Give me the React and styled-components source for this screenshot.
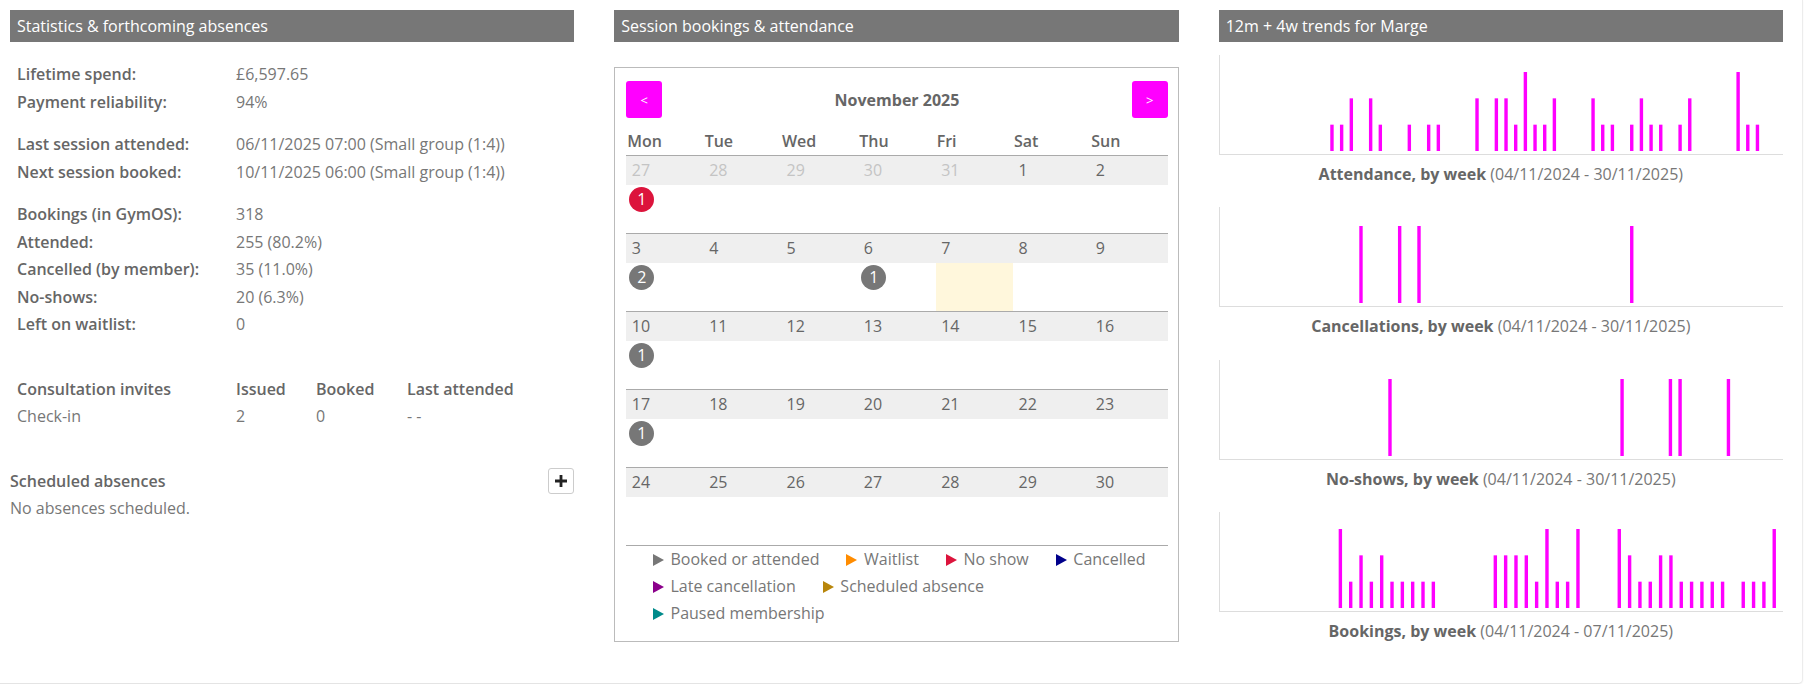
import React from 'react';
import styled, { createGlobalStyle } from 'styled-components';

const GlobalStyle = createGlobalStyle`
  html, body { margin: 0; padding: 0; background: #fff; }
  body { font-family: "Open Sans", "Noto Sans", sans-serif; font-size: 16px; color: #777; }
  *, *::before, *::after { box-sizing: border-box; }
`;

const Card = styled.div`
  width: 1803px;
  background: #fff;
  padding: 10px 19px 41px 10px;
  border-right: 1px solid #ececec;
  border-bottom: 1px solid #e4e4e4;
  border-radius: 0 0 5px 0;
  box-shadow: 0 1px 2px rgba(0, 0, 0, 0.06);
  display: grid;
  grid-template-columns: repeat(3, minmax(0, 1fr));
  column-gap: 40px;
  align-items: start;
`;

const Column = styled.section`
  display: flex;
  flex-direction: column;
  min-width: 0;
`;

const PanelHeader = styled.div`
  height: 32px;
  line-height: 32px;
  background: #777;
  color: #fff;
  font-size: 16px;
  padding-left: 7px;
  white-space: nowrap;
`;

/* ---------- left column ---------- */
const StatGroup = styled.div`
  margin-top: ${(p) => p.$top || 0}px;
`;

const StatRow = styled.div`
  display: grid;
  grid-template-columns: ${(p) => p.$cols || '219px 1fr'};
  line-height: 27.5px;
  padding-left: 7px;
  white-space: nowrap;
`;

const Label = styled.span`
  font-weight: 600;
  color: #666;
`;

const Value = styled.span`
  color: #777;
`;

const AbsenceHead = styled.div`
  margin-top: 37px;
  height: 27px;
  display: flex;
  align-items: center;
  justify-content: space-between;
`;

const SubHeading = styled.span`
  font-weight: 600;
  color: #666;
`;

const PlusButton = styled.button`
  width: 26px;
  height: 26px;
  padding: 0;
  border: 1px solid #ccc;
  border-radius: 3px;
  background: #fff;
  display: flex;
  align-items: center;
  justify-content: center;
  cursor: pointer;
`;

const Note = styled.div`
  line-height: 27px;
  color: #777;
`;

/* ---------- middle column ---------- */
const CalendarBox = styled.div`
  margin-top: 25px;
  border: 1px solid #bbb;
  padding: 13px 10px 14px 11px;
`;

const NavRow = styled.div`
  height: 37px;
  display: flex;
  align-items: center;
  justify-content: space-between;
`;

const NavButton = styled.button`
  width: 36px;
  height: 37px;
  border: none;
  border-radius: 3px;
  background: #f0f;
  color: #fff;
  font-family: inherit;
  font-size: 13px;
  padding: 0;
  cursor: pointer;
`;

const MonthTitle = styled.div`
  font-weight: 700;
  color: #666;
  font-size: 16px;
`;

const DayHeadRow = styled.div`
  display: grid;
  grid-template-columns: repeat(7, 1fr);
  padding: 12px 0 3px;
  line-height: 22px;
`;

const DayHead = styled.div`
  font-weight: 600;
  color: #666;
  padding-left: 1px;
`;

const Week = styled.div`
  border-top: 1px solid #aaa;
`;

const DateStrip = styled.div`
  display: grid;
  grid-template-columns: repeat(7, 1fr);
  height: 29px;
  line-height: 29px;
  background: #efefef;
`;

const DateNum = styled.div`
  padding-left: 5.5px;
  color: ${(p) => (p.$muted ? '#c4c4c4' : '#666')};
`;

const DayCells = styled.div`
  display: grid;
  grid-template-columns: repeat(7, 1fr);
  height: 48px;
`;

const DayCell = styled.div`
  background: ${(p) => (p.$today ? '#fff7dc' : 'transparent')};
  padding: 2px 0 0 3px;
`;

const Badge = styled.div`
  width: 25px;
  height: 25px;
  border-radius: 50%;
  background: ${(p) => p.$color};
  color: #fff;
  text-align: center;
  line-height: 25px;
  font-size: 16px;
`;

const Legend = styled.ul`
  list-style: none;
  margin: 0;
  border-top: 1px solid #aaa;
  padding: 0 0 0 26.6px;
  display: flex;
  flex-wrap: wrap;
  column-gap: 27px;
  line-height: 27px;
`;

const LegendItem = styled.li`
  display: inline-flex;
  align-items: center;
  gap: 6.6px;
  color: #777;
  white-space: nowrap;
`;

const Tri = styled.span`
  width: 0;
  height: 0;
  border-left: 11px solid ${(p) => p.$color};
  border-top: 6.5px solid transparent;
  border-bottom: 6.5px solid transparent;
`;

/* ---------- right column ---------- */
const ChartBlock = styled.div`
  margin-top: ${(p) => p.$top}px;
`;

const Plot = styled.div`
  height: 100px;
  border-left: 1px solid #ddd;
  border-bottom: 1px solid #ddd;
`;

const PlotSvg = styled.svg`
  display: block;
  width: 100%;
  height: 99px;
`;

const Caption = styled.div`
  margin-top: 8px;
  line-height: 22px;
  text-align: center;
  color: #777;
  white-space: nowrap;
`;

const CaptionStrong = styled.span`
  font-weight: 700;
  color: #666;
`;

const MAGENTA = '#f0f';

const range = (a, b) => Array.from({ length: b - a + 1 }, (_, i) => a + i);

const charts = [
  {
    title: 'Attendance, by week',
    dates: '(04/11/2024 - 30/11/2025)',
    base: 111.97,
    step: 9.67,
    unit: 26.33,
    weeks: [0, 1, 2, 4, 5, 8, 10, 11, 15, 17, 18, 19, 20, 21, 22, 23, 27, 28, 29, 31, 32, 33, 34, 36, 37, 42, 43, 44],
    values: [1, 1, 2, 2, 1, 1, 1, 1, 2, 2, 2, 1, 3, 1, 1, 2, 2, 1, 1, 1, 2, 1, 1, 1, 2, 3, 1, 1],
    top: 13,
  },
  {
    title: 'Cancellations, by week',
    dates: '(04/11/2024 - 30/11/2025)',
    base: 111.97,
    step: 9.67,
    unit: 77,
    weeks: [3, 7, 9, 31],
    values: [1, 1, 1, 1],
    top: 22,
  },
  {
    title: 'No-shows, by week',
    dates: '(04/11/2024 - 30/11/2025)',
    base: 111.97,
    step: 9.67,
    unit: 77,
    weeks: [6, 30, 35, 36, 41],
    values: [1, 1, 1, 1, 1],
    top: 23,
  },
  {
    title: 'Bookings, by week',
    dates: '(04/11/2024 - 07/11/2025)',
    base: 120.37,
    step: 10.33,
    unit: 26.33,
    weeks: [...range(0, 9), ...range(15, 23), ...range(27, 37), ...range(39, 42)],
    values: [3, 1, 2, 1, 2, 1, 1, 1, 1, 1, 2, 2, 2, 2, 1, 3, 1, 1, 3, 3, 2, 1, 1, 2, 2, 1, 1, 1, 1, 1, 1, 1, 1, 3],
    top: 22,
  },
];

function BarChart({ chart }) {
  return (
    <ChartBlock $top={chart.top}>
      <Plot>
        <PlotSvg>
          {chart.weeks.map((w, i) => {
            const cx = chart.base + chart.step * w;
            const h = chart.values[i] * chart.unit;
            return <rect key={w} x={cx - 1.7} y={96 - h} width={3.4} height={h} fill={MAGENTA} />;
          })}
        </PlotSvg>
      </Plot>
      <Caption>
        <CaptionStrong>{chart.title}</CaptionStrong> {chart.dates}
      </Caption>
    </ChartBlock>
  );
}

const weeks = [
  { dates: [27, 28, 29, 30, 31, 1, 2], muted: 5, badges: { 0: ['1', '#dc143c'] } },
  { dates: [3, 4, 5, 6, 7, 8, 9], badges: { 0: ['2', '#777'], 3: ['1', '#777'] }, today: 4 },
  { dates: [10, 11, 12, 13, 14, 15, 16], badges: { 0: ['1', '#777'] } },
  { dates: [17, 18, 19, 20, 21, 22, 23], badges: { 0: ['1', '#777'] } },
  { dates: [24, 25, 26, 27, 28, 29, 30], badges: {} },
];

const legend = [
  ['Booked or attended', '#777'],
  ['Waitlist', '#ff8c00'],
  ['No show', '#dc143c'],
  ['Cancelled', '#00008b'],
  ['Late cancellation', '#8b008b'],
  ['Scheduled absence', '#b8860b'],
  ['Paused membership', '#008b8b'],
];

export default function App() {
  return (
    <>
      <GlobalStyle />
      <Card>
        <Column>
          <PanelHeader>Statistics &amp; forthcoming absences</PanelHeader>
          <StatGroup $top={19}>
            <StatRow><Label>Lifetime spend:</Label><Value>£6,597.65</Value></StatRow>
            <StatRow><Label>Payment reliability:</Label><Value>94%</Value></StatRow>
          </StatGroup>
          <StatGroup $top={15}>
            <StatRow><Label>Last session attended:</Label><Value>06/11/2025 07:00 (Small group (1:4))</Value></StatRow>
            <StatRow><Label>Next session booked:</Label><Value>10/11/2025 06:00 (Small group (1:4))</Value></StatRow>
          </StatGroup>
          <StatGroup $top={15}>
            <StatRow><Label>Bookings (in GymOS):</Label><Value>318</Value></StatRow>
            <StatRow><Label>Attended:</Label><Value>255 (80.2%)</Value></StatRow>
            <StatRow><Label>Cancelled (by member):</Label><Value>35 (11.0%)</Value></StatRow>
            <StatRow><Label>No-shows:</Label><Value>20 (6.3%)</Value></StatRow>
            <StatRow><Label>Left on waitlist:</Label><Value>0</Value></StatRow>
          </StatGroup>
          <StatGroup $top={37}>
            <StatRow $cols="219px 80px 91px 1fr">
              <Label>Consultation invites</Label><Label>Issued</Label><Label>Booked</Label><Label>Last attended</Label>
            </StatRow>
            <StatRow $cols="219px 80px 91px 1fr">
              <Value>Check-in</Value><Value>2</Value><Value>0</Value><Value>- -</Value>
            </StatRow>
          </StatGroup>
          <AbsenceHead>
            <SubHeading>Scheduled absences</SubHeading>
            <PlusButton aria-label="Add absence">
              <svg width="14" height="14" viewBox="0 0 14 14">
                <path d="M7 1v12M1 7h12" stroke="#222" strokeWidth="2.8" fill="none" />
              </svg>
            </PlusButton>
          </AbsenceHead>
          <Note>No absences scheduled.</Note>
        </Column>

        <Column>
          <PanelHeader>Session bookings &amp; attendance</PanelHeader>
          <CalendarBox>
            <NavRow>
              <NavButton>&lt;</NavButton>
              <MonthTitle>November 2025</MonthTitle>
              <NavButton>&gt;</NavButton>
            </NavRow>
            <DayHeadRow>
              {['Mon', 'Tue', 'Wed', 'Thu', 'Fri', 'Sat', 'Sun'].map((d) => (
                <DayHead key={d}>{d}</DayHead>
              ))}
            </DayHeadRow>
            {weeks.map((wk, wi) => (
              <Week key={wi}>
                <DateStrip>
                  {wk.dates.map((d, i) => (
                    <DateNum key={i} $muted={wk.muted && i < wk.muted}>{d}</DateNum>
                  ))}
                </DateStrip>
                <DayCells>
                  {wk.dates.map((d, i) => (
                    <DayCell key={i} $today={wk.today === i}>
                      {wk.badges[i] && <Badge $color={wk.badges[i][1]}>{wk.badges[i][0]}</Badge>}
                    </DayCell>
                  ))}
                </DayCells>
              </Week>
            ))}
            <Legend>
              {legend.map(([t, c]) => (
                <LegendItem key={t}><Tri $color={c} />{t}</LegendItem>
              ))}
            </Legend>
          </CalendarBox>
        </Column>

        <Column>
          <PanelHeader>12m + 4w trends for Marge</PanelHeader>
          {charts.map((c) => (
            <BarChart key={c.title} chart={c} />
          ))}
        </Column>
      </Card>
    </>
  );
}
